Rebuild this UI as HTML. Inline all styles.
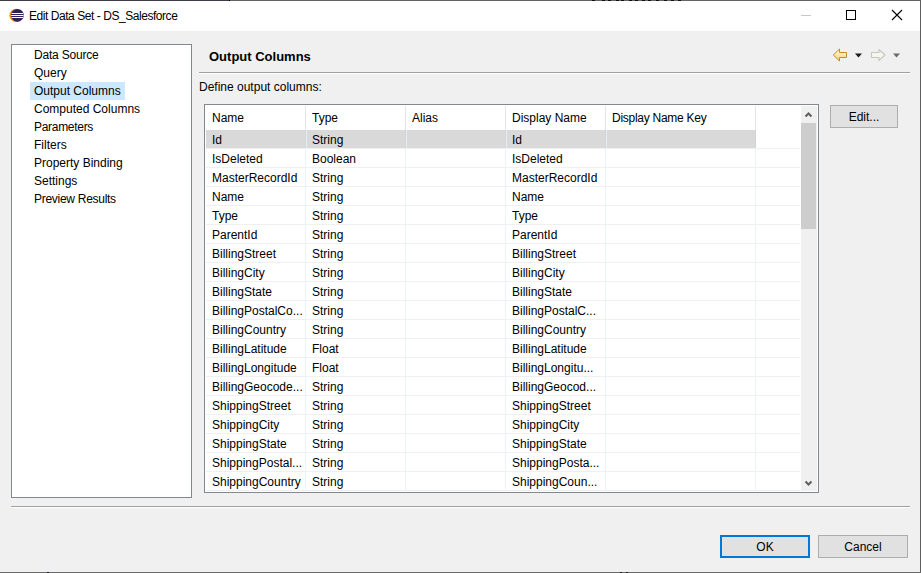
<!DOCTYPE html>
<html><head><meta charset="utf-8">
<style>
html,body{margin:0;padding:0;}
body{width:921px;height:573px;position:relative;overflow:hidden;background:#f0f0f0;font-family:"Liberation Sans",sans-serif;font-size:12px;color:#000;}
.a{position:absolute;}
.t{position:absolute;white-space:nowrap;line-height:14px;}
#title{left:0;top:1px;width:920px;height:30px;background:#fff;}
#topline{left:0;top:0;width:921px;height:1px;background:#646464;}
#topline2{left:0;top:0;width:229px;height:1px;background:#3d3e4c;}
#botline{left:0;top:572px;width:921px;height:1px;background:#6a6a6a;}
#rightline{left:920px;top:0;width:1px;height:573px;background:#5e5e5e;}
#tree{left:11px;top:44px;width:179px;height:452px;border:1px solid #828790;background:#fff;}
#sel{left:30px;top:82px;width:95px;height:18px;background:#cce8ff;}
.sep{height:1px;background:#a0a0a0;border-bottom:1px solid #fff;}
#table{left:204px;top:104px;width:613px;height:387px;border:1px solid #828790;background:#fff;}
.btn{position:absolute;box-sizing:border-box;background:#e1e1e1;border:1px solid #adadad;text-align:center;line-height:21px;padding-top:1px;}
</style></head>
<body>
<div id="topline" class="a"></div><div id="topline2" class="a"></div><div class="a" style="left:229px;top:0;width:1px;height:1px;background:#000"></div><div class="a" style="left:592px;top:0;width:3px;height:1px;background:#111"></div><div class="a" style="left:602px;top:0;width:3px;height:1px;background:#111"></div><div class="a" style="left:608px;top:0;width:3px;height:1px;background:#111"></div><div class="a" style="left:616px;top:0;width:3px;height:1px;background:#111"></div><div class="a" style="left:621px;top:0;width:3px;height:1px;background:#111"></div><div class="a" style="left:629px;top:0;width:3px;height:1px;background:#111"></div><div class="a" style="left:635px;top:0;width:3px;height:1px;background:#111"></div><div class="a" style="left:642px;top:0;width:3px;height:1px;background:#111"></div><div class="a" style="left:648px;top:0;width:3px;height:1px;background:#111"></div><div class="a" style="left:656px;top:0;width:3px;height:1px;background:#111"></div><div class="a" style="left:664px;top:0;width:3px;height:1px;background:#111"></div><div class="a" style="left:671px;top:0;width:3px;height:1px;background:#111"></div><div class="a" style="left:678px;top:0;width:3px;height:1px;background:#111"></div>
<div id="title" class="a">
  <svg class="a" style="left:9px;top:7px" width="16" height="15" viewBox="0 0 16 15">
    <circle cx="7.0" cy="7.3" r="6.6" fill="#f7941e"/>
    <circle cx="8.4" cy="7.3" r="6.4" fill="#2c2255"/>
    <rect x="2.6" y="5" width="11.6" height="1" fill="#fff"/>
    <rect x="2.2" y="7" width="12.4" height="1" fill="#fff"/>
    <rect x="2.6" y="9" width="11.6" height="1" fill="#fff"/>
  </svg>
  <div class="t" style="left:29px;top:8px;font-size:12px;letter-spacing:-0.45px">Edit Data Set - DS_Salesforce</div>
  <div class="a" style="left:801px;top:14px;width:10px;height:1px;background:#c8c8c8"></div>
  <div class="a" style="left:846px;top:9px;width:8px;height:8px;border:1px solid #000"></div>
  <svg class="a" style="left:891px;top:8px" width="12" height="12" viewBox="0 0 12 12">
    <path d="M1 1 L11 11 M11 1 L1 11" stroke="#000" stroke-width="1.1"/>
  </svg>
</div>
<div id="rightline" class="a"></div>
<div id="botline" class="a"></div><div class="a" style="left:47px;top:572px;width:2px;height:1px;background:#1a1020"></div><div class="a" style="left:620px;top:572px;width:2px;height:1px;background:#1a1020"></div><div class="a" style="left:626px;top:572px;width:2px;height:1px;background:#1a1020"></div>

<!-- tree -->
<div id="tree" class="a"></div>
<div id="sel" class="a"></div>
<div class="t" style="left:34px;top:48px;letter-spacing:-0.2px">Data Source</div>
<div class="t" style="left:34px;top:66px">Query</div>
<div class="t" style="left:34px;top:84px">Output Columns</div>
<div class="t" style="left:34px;top:102px">Computed Columns</div>
<div class="t" style="left:34px;top:120px;letter-spacing:-0.3px">Parameters</div>
<div class="t" style="left:34px;top:138px">Filters</div>
<div class="t" style="left:34px;top:156px">Property Binding</div>
<div class="t" style="left:34px;top:174px">Settings</div>
<div class="t" style="left:34px;top:192px;letter-spacing:-0.28px">Preview Results</div>

<!-- right header -->
<div class="t" style="left:209px;top:50px;font-weight:bold;font-size:13px">Output Columns</div>
<div class="a sep" style="left:199px;top:72px;width:711px"></div>
<div class="t" style="left:199px;top:80px">Define output columns:</div>
<!-- nav arrows -->
<svg class="a" style="left:832px;top:48px" width="16" height="14" viewBox="0 0 16 14">
  <defs><linearGradient id="gb" x1="0" y1="0" x2="0" y2="1"><stop offset="0" stop-color="#fffbe6"/><stop offset="1" stop-color="#f6d075"/></linearGradient></defs>
  <path d="M1.3 7 L7.5 1 L7.5 4.5 L14.5 4.5 L14.5 9.5 L7.5 9.5 L7.5 13 Z" fill="url(#gb)" stroke="#c98b1c" stroke-width="1" stroke-linejoin="round"/>
</svg>
<svg class="a" style="left:854px;top:53px" width="9" height="6" viewBox="0 0 9 6"><path d="M1 0.5 L8 0.5 L4.5 4.5 Z" fill="#1a1a1a"/></svg>
<svg class="a" style="left:870px;top:48px" width="16" height="14" viewBox="0 0 16 14">
  <path d="M15 7 L9 1.5 L9 4.5 L1.5 4.5 L1.5 9.5 L9 9.5 L9 12.5 Z" fill="#f6f6f0" stroke="#c8c8c0" stroke-width="1.1" stroke-linejoin="round"/>
</svg>
<svg class="a" style="left:892px;top:53px" width="9" height="6" viewBox="0 0 9 6"><path d="M1 0.5 L8 0.5 L4.5 4.5 Z" fill="#6a6a6a"/></svg>


<!-- table -->
<div id="table" class="a"></div>
<div class="a" style="left:305px;top:106px;width:1px;height:24px;background:#e5e5e5"></div>
<div class="a" style="left:405px;top:106px;width:1px;height:24px;background:#e5e5e5"></div>
<div class="a" style="left:505px;top:106px;width:1px;height:24px;background:#e5e5e5"></div>
<div class="a" style="left:605px;top:106px;width:1px;height:24px;background:#e5e5e5"></div>
<div class="a" style="left:755px;top:106px;width:1px;height:24px;background:#e5e5e5"></div>
<div class="t" style="left:212px;top:111px">Name</div>
<div class="t" style="left:312px;top:111px">Type</div>
<div class="t" style="left:412px;top:111px">Alias</div>
<div class="t" style="left:512px;top:111px">Display Name</div>
<div class="t" style="left:612px;top:111px;letter-spacing:-0.27px">Display Name Key</div>
<div class="a" style="left:206px;top:130px;width:550px;height:18px;background:#d9d9d9"></div><div class="a" style="left:305px;top:130px;width:1px;height:18px;background:#cdd5df"></div><div class="a" style="left:306px;top:130px;width:1px;height:18px;background:#ececec"></div><div class="a" style="left:405px;top:130px;width:1px;height:18px;background:#cdd5df"></div><div class="a" style="left:406px;top:130px;width:1px;height:18px;background:#ececec"></div><div class="a" style="left:505px;top:130px;width:1px;height:18px;background:#cdd5df"></div><div class="a" style="left:506px;top:130px;width:1px;height:18px;background:#ececec"></div><div class="a" style="left:605px;top:130px;width:1px;height:18px;background:#cdd5df"></div><div class="a" style="left:606px;top:130px;width:1px;height:18px;background:#ececec"></div><div class="a" style="left:755px;top:130px;width:1px;height:18px;background:#cdd5df"></div>
<div class="a" style="left:305px;top:148px;width:1px;height:342px;background:#eaf2fb"></div>
<div class="a" style="left:405px;top:148px;width:1px;height:342px;background:#eaf2fb"></div>
<div class="a" style="left:505px;top:148px;width:1px;height:342px;background:#eaf2fb"></div>
<div class="a" style="left:605px;top:148px;width:1px;height:342px;background:#eaf2fb"></div>
<div class="a" style="left:755px;top:148px;width:1px;height:342px;background:#eaf2fb"></div>
<div class="a" style="left:206px;top:148px;width:594px;height:1px;background:#f0f0f0"></div>
<div class="a" style="left:206px;top:167px;width:594px;height:1px;background:#f0f0f0"></div>
<div class="a" style="left:206px;top:186px;width:594px;height:1px;background:#f0f0f0"></div>
<div class="a" style="left:206px;top:205px;width:594px;height:1px;background:#f0f0f0"></div>
<div class="a" style="left:206px;top:224px;width:594px;height:1px;background:#f0f0f0"></div>
<div class="a" style="left:206px;top:243px;width:594px;height:1px;background:#f0f0f0"></div>
<div class="a" style="left:206px;top:262px;width:594px;height:1px;background:#f0f0f0"></div>
<div class="a" style="left:206px;top:281px;width:594px;height:1px;background:#f0f0f0"></div>
<div class="a" style="left:206px;top:300px;width:594px;height:1px;background:#f0f0f0"></div>
<div class="a" style="left:206px;top:319px;width:594px;height:1px;background:#f0f0f0"></div>
<div class="a" style="left:206px;top:338px;width:594px;height:1px;background:#f0f0f0"></div>
<div class="a" style="left:206px;top:357px;width:594px;height:1px;background:#f0f0f0"></div>
<div class="a" style="left:206px;top:376px;width:594px;height:1px;background:#f0f0f0"></div>
<div class="a" style="left:206px;top:395px;width:594px;height:1px;background:#f0f0f0"></div>
<div class="a" style="left:206px;top:414px;width:594px;height:1px;background:#f0f0f0"></div>
<div class="a" style="left:206px;top:433px;width:594px;height:1px;background:#f0f0f0"></div>
<div class="a" style="left:206px;top:452px;width:594px;height:1px;background:#f0f0f0"></div>
<div class="a" style="left:206px;top:471px;width:594px;height:1px;background:#f0f0f0"></div>
<div class="a" style="left:206px;top:490px;width:594px;height:1px;background:#f0f0f0"></div>
<div class="t" style="left:212px;top:133px">Id</div><div class="t" style="left:312px;top:133px">String</div><div class="t" style="left:512px;top:133px">Id</div>
<div class="t" style="left:212px;top:152px">IsDeleted</div><div class="t" style="left:312px;top:152px">Boolean</div><div class="t" style="left:512px;top:152px">IsDeleted</div>
<div class="t" style="left:212px;top:171px">MasterRecordId</div><div class="t" style="left:312px;top:171px">String</div><div class="t" style="left:512px;top:171px">MasterRecordId</div>
<div class="t" style="left:212px;top:190px">Name</div><div class="t" style="left:312px;top:190px">String</div><div class="t" style="left:512px;top:190px">Name</div>
<div class="t" style="left:212px;top:209px">Type</div><div class="t" style="left:312px;top:209px">String</div><div class="t" style="left:512px;top:209px">Type</div>
<div class="t" style="left:212px;top:228px">ParentId</div><div class="t" style="left:312px;top:228px">String</div><div class="t" style="left:512px;top:228px">ParentId</div>
<div class="t" style="left:212px;top:247px">BillingStreet</div><div class="t" style="left:312px;top:247px">String</div><div class="t" style="left:512px;top:247px">BillingStreet</div>
<div class="t" style="left:212px;top:266px">BillingCity</div><div class="t" style="left:312px;top:266px">String</div><div class="t" style="left:512px;top:266px">BillingCity</div>
<div class="t" style="left:212px;top:285px">BillingState</div><div class="t" style="left:312px;top:285px">String</div><div class="t" style="left:512px;top:285px">BillingState</div>
<div class="t" style="left:212px;top:304px">BillingPostalCo...</div><div class="t" style="left:312px;top:304px">String</div><div class="t" style="left:512px;top:304px">BillingPostalC...</div>
<div class="t" style="left:212px;top:323px">BillingCountry</div><div class="t" style="left:312px;top:323px">String</div><div class="t" style="left:512px;top:323px">BillingCountry</div>
<div class="t" style="left:212px;top:342px">BillingLatitude</div><div class="t" style="left:312px;top:342px">Float</div><div class="t" style="left:512px;top:342px">BillingLatitude</div>
<div class="t" style="left:212px;top:361px">BillingLongitude</div><div class="t" style="left:312px;top:361px">Float</div><div class="t" style="left:512px;top:361px">BillingLongitu...</div>
<div class="t" style="left:212px;top:380px">BillingGeocode...</div><div class="t" style="left:312px;top:380px">String</div><div class="t" style="left:512px;top:380px">BillingGeocod...</div>
<div class="t" style="left:212px;top:399px">ShippingStreet</div><div class="t" style="left:312px;top:399px">String</div><div class="t" style="left:512px;top:399px">ShippingStreet</div>
<div class="t" style="left:212px;top:418px">ShippingCity</div><div class="t" style="left:312px;top:418px">String</div><div class="t" style="left:512px;top:418px">ShippingCity</div>
<div class="t" style="left:212px;top:437px">ShippingState</div><div class="t" style="left:312px;top:437px">String</div><div class="t" style="left:512px;top:437px">ShippingState</div>
<div class="t" style="left:212px;top:456px">ShippingPostal...</div><div class="t" style="left:312px;top:456px">String</div><div class="t" style="left:512px;top:456px">ShippingPosta...</div>
<div class="t" style="left:212px;top:475px">ShippingCountry</div><div class="t" style="left:312px;top:475px">String</div><div class="t" style="left:512px;top:475px">ShippingCoun...</div>
<div class="a" style="left:801px;top:106px;width:16px;height:385px;background:#f0f0f0"></div>
<div class="a" style="left:801px;top:123px;width:15px;height:106px;background:#cdcdcd"></div>
<svg class="a" style="left:801px;top:106px" width="16" height="17" viewBox="0 0 16 17"><path d="M4.5 10.5 L7.5 7.5 L10.5 10.5" fill="none" stroke="#606060" stroke-width="2"/></svg>
<svg class="a" style="left:801px;top:474px" width="16" height="17" viewBox="0 0 16 17"><path d="M4.5 7.5 L7.5 10.5 L10.5 7.5" fill="none" stroke="#606060" stroke-width="2"/></svg>

<div class="btn" style="left:830px;top:105px;width:68px;height:23px">Edit...</div>

<div class="a sep" style="left:11px;top:506px;width:899px"></div>
<div class="btn" style="left:720px;top:535px;width:90px;height:23px;border:2px solid #0078d7;line-height:19px">OK</div>
<div class="btn" style="left:818px;top:535px;width:90px;height:23px">Cancel</div>
</body></html>
